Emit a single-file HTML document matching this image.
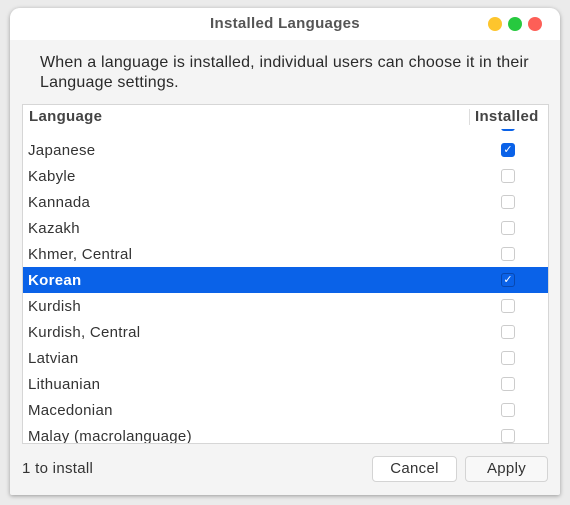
<!DOCTYPE html>
<html><head><style>
*{margin:0;padding:0;box-sizing:border-box}
body{width:570px;height:505px;background:#ebebeb;font-family:"Liberation Sans","DejaVu Sans",sans-serif;position:relative;overflow:hidden;color:#333}
.win{position:absolute;left:10px;top:8px;width:550px;height:487px;background:#f4f4f4;border-radius:10px 10px 2px 2px;box-shadow:0 1px 4px rgba(0,0,0,.35);overflow:hidden}
.tb{position:absolute;left:0;top:0;width:550px;height:32px;background:#fff}
.title{position:absolute;top:7px;width:100%;text-align:center;font-size:15px;font-weight:bold;color:#555;letter-spacing:0.3px}
.dot{position:absolute;top:9px;width:14px;height:14px;border-radius:50%}
.desc{position:absolute;left:30px;top:45px;font-size:16px;letter-spacing:0.2px;line-height:20px;color:#2a2a2a;width:515px}
.list{position:absolute;left:12px;top:96px;width:527px;height:340px;background:#fff;border:1px solid #d6d6d6;overflow:hidden}
.hd{position:absolute;left:0;top:0;width:100%;height:24px;background:#fff;font-weight:bold;font-size:15px;color:#444;z-index:2;letter-spacing:0.3px}
.row{position:absolute;left:0;width:100%;height:26px;font-size:15px;letter-spacing:0.3px;line-height:28px;padding-left:5px;color:#333}
.cb{position:absolute;left:478px;top:6px;width:14px;height:14px;border:1px solid #ccc;border-radius:3px;background:#fff}
.sel{background:#0a62e8;color:#fff;font-weight:bold}
.btn{position:absolute;top:448px;height:26px;border:1px solid #d4d4d4;border-radius:4px;background:#fff;font-size:15px;text-align:center;line-height:24px;color:#333;letter-spacing:0.3px}
</style></head><body>
<div class="win">
<div class="tb"><div class="title">Installed Languages</div>
<div class="dot" style="left:478px;background:#fdc52d"></div>
<div class="dot" style="left:498px;background:#27c93f"></div>
<div class="dot" style="left:518px;background:#fd5f57"></div></div>
<div class="desc">When a language is installed, individual users can choose it in their Language settings.</div>
<div class="list">
<div class="hd"><span style="position:absolute;left:6px;top:3px">Language</span><span style="position:absolute;left:446px;top:4px;width:1px;height:16px;background:#ddd"></span><span style="position:absolute;left:452px;top:3px">Installed</span></div>
<div class="row" style="top:6px"><div class="cb" style="background:#0a62e8;border-color:#0a62e8"></div></div>
<div class="row" style="top:32px">Japanese<div class="cb" style="background:#0a62e8;border-color:#0a62e8;color:#fff;font-size:11px;line-height:12px;text-align:center;letter-spacing:0">✓</div></div>
<div class="row" style="top:58px">Kabyle<div class="cb"></div></div>
<div class="row" style="top:84px">Kannada<div class="cb"></div></div>
<div class="row" style="top:110px">Kazakh<div class="cb"></div></div>
<div class="row" style="top:136px">Khmer, Central<div class="cb"></div></div>
<div class="row sel" style="top:162px">Korean<div class="cb" style="background:#0a62e8;border-color:#0848b0;color:#fff;font-size:11px;line-height:12px;text-align:center;font-weight:normal;letter-spacing:0">✓</div></div>
<div class="row" style="top:188px">Kurdish<div class="cb"></div></div>
<div class="row" style="top:214px">Kurdish, Central<div class="cb"></div></div>
<div class="row" style="top:240px">Latvian<div class="cb"></div></div>
<div class="row" style="top:266px">Lithuanian<div class="cb"></div></div>
<div class="row" style="top:292px">Macedonian<div class="cb"></div></div>
<div class="row" style="top:318px">Malay (macrolanguage)<div class="cb"></div></div>
</div>
<div style="position:absolute;left:12px;top:452px;font-size:15px;color:#333;letter-spacing:0.3px">1 to install</div>
<div class="btn" style="left:362px;width:85px">Cancel</div>
<div class="btn" style="left:455px;width:83px;background:#f8f8f8">Apply</div>
</div>
</body></html>
